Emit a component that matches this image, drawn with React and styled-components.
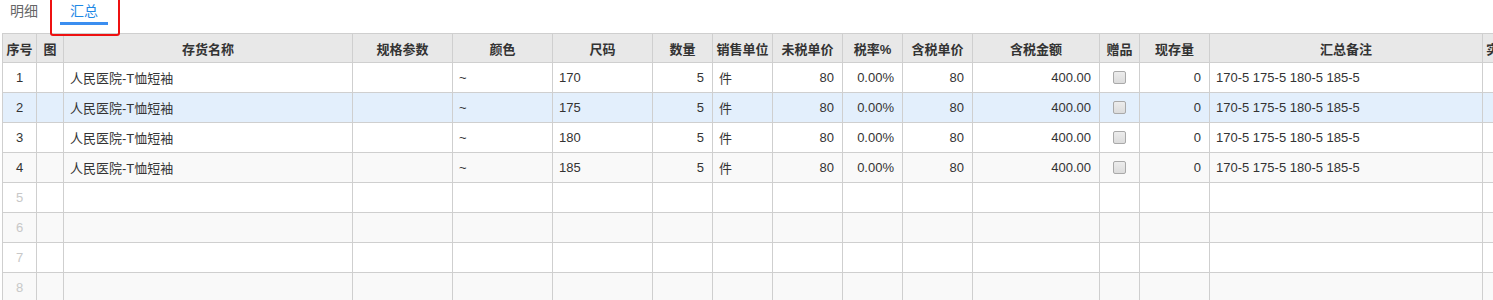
import React from "react";
import styled, { createGlobalStyle } from "styled-components";

const GlobalStyle = createGlobalStyle`
  html, body {
    margin: 0;
    padding: 0;
    background: #fff;
    overflow: hidden;
  }
  body {
    font-family: "Liberation Sans", Arial, "Noto Sans CJK SC", sans-serif;
    font-size: 13px;
    color: #333;
  }
`;

const columns = [
  { key: "seq", title: "序号", width: 35, align: "center", first: true },
  { key: "img", title: "图", width: 27 },
  { key: "name", title: "存货名称", width: 289 },
  { key: "spec", title: "规格参数", width: 100 },
  { key: "color", title: "颜色", width: 100 },
  { key: "size", title: "尺码", width: 100 },
  { key: "qty", title: "数量", width: 60, align: "right" },
  { key: "unit", title: "销售单位", width: 60 },
  { key: "price", title: "未税单价", width: 70, align: "right" },
  { key: "rate", title: "税率%", width: 60, align: "right" },
  { key: "taxPrice", title: "含税单价", width: 70, align: "right" },
  { key: "amount", title: "含税金额", width: 127, align: "right" },
  { key: "gift", title: "赠品", width: 40, align: "center" },
  { key: "stock", title: "现存量", width: 70, align: "right" },
  { key: "remark", title: "汇总备注", width: 273 },
  { key: "extra", title: "实发数量", width: 100, headAlign: "left" },
];

const sizes = ["170", "175", "180", "185"];

const rows = Array.from({ length: 8 }, (_, i) => {
  if (i >= sizes.length) return { seq: i + 1, empty: true };
  return {
    seq: i + 1,
    name: "人民医院-T恤短袖",
    color: "~",
    size: sizes[i],
    qty: "5",
    unit: "件",
    price: "80",
    rate: "0.00%",
    taxPrice: "80",
    amount: "400.00",
    gift: true,
    stock: "0",
    remark: "170-5 175-5 180-5 185-5",
  };
});

const App = () => {
  return (
    <Page>
      <GlobalStyle />
      <TabBar>
        <Tab>明细</Tab>
        <Tab $active>汇总</Tab>
        <Highlight />
      </TabBar>
      <Grid>
        <HeadRow>
          {columns.map((c) => (
            <HeadCell
              key={c.key}
              $w={c.width}
              $first={c.first}
              $align={c.headAlign || "center"}
            >
              {c.title}
            </HeadCell>
          ))}
        </HeadRow>
        {rows.map((r) => (
          <Row key={r.seq} $selected={r.seq === 2} $even={r.seq % 2 === 0}>
            {columns.map((c) => (
              <Cell
                key={c.key}
                $w={c.width}
                $first={c.first}
                $align={c.align || "left"}
                $muted={r.empty && c.key === "seq"}
              >
                {c.key === "gift"
                  ? r.gift && <Check />
                  : r[c.key]}
              </Cell>
            ))}
          </Row>
        ))}
      </Grid>
    </Page>
  );
};

export default App;

const Page = styled.div`
  width: 1493px;
  height: 300px;
  overflow: hidden;
`;

const TabBar = styled.div`
  position: relative;
  display: flex;
  height: 33px;
  padding-left: 0;
`;

const Tab = styled.div`
  position: relative;
  height: 33px;
  padding: 3px 10px 0;
  margin-right: ${(p) => (p.$active ? "0" : "12px")};
  box-sizing: border-box;
  font-size: 14px;
  line-height: 16px;
  color: ${(p) => (p.$active ? "#1e88e5" : "#666")};

  &::after {
    content: "";
    display: ${(p) => (p.$active ? "block" : "none")};
    position: absolute;
    left: 0;
    right: 0;
    top: 22px;
    height: 3px;
    background: #3b8ef0;
  }
`;

const Highlight = styled.div`
  position: absolute;
  left: 50px;
  top: -4px;
  width: 70px;
  height: 40px;
  box-sizing: border-box;
  border: 2px solid #ee1111;
  border-radius: 3px;
  z-index: 2;
`;

const Grid = styled.div`
  padding-left: 2px;
`;

const HeadRow = styled.div`
  display: flex;
  height: 30px;
  background: #e8e8e8;
`;

const Row = styled.div`
  display: flex;
  height: 30px;
  background: ${(p) =>
    p.$selected ? "#e3effc" : p.$even ? "#f9f9f9" : "#fff"};
`;

const BaseCell = styled.div`
  flex: 0 0 ${(p) => p.$w}px;
  width: ${(p) => p.$w}px;
  box-sizing: border-box;
  border-right: 1px solid #cfcfcf;
  border-bottom: 1px solid #cfcfcf;
  border-left: ${(p) => (p.$first ? "1px solid #cfcfcf" : "none")};
  display: flex;
  align-items: center;
  justify-content: ${(p) =>
    p.$align === "right"
      ? "flex-end"
      : p.$align === "center"
      ? "center"
      : "flex-start"};
  white-space: nowrap;
  overflow: hidden;
`;

const HeadCell = styled(BaseCell)`
  border-top: 1px solid #cfcfcf;
  font-weight: bold;
  color: #333;
  padding: 0 ${(p) => (p.$align === "left" ? "3px" : "0")};
`;

const Cell = styled(BaseCell)`
  padding: 0 8px 0 6px;
  color: ${(p) => (p.$muted ? "#c8c8c8" : "#333")};
  ${(p) => p.$align === "center" && "padding: 0;"}
`;

const Check = styled.span`
  display: block;
  width: 13px;
  height: 13px;
  box-sizing: border-box;
  border: 1px solid #a9a9a9;
  border-radius: 2px;
  background: linear-gradient(#ececec, #dcdcdc);
`;
